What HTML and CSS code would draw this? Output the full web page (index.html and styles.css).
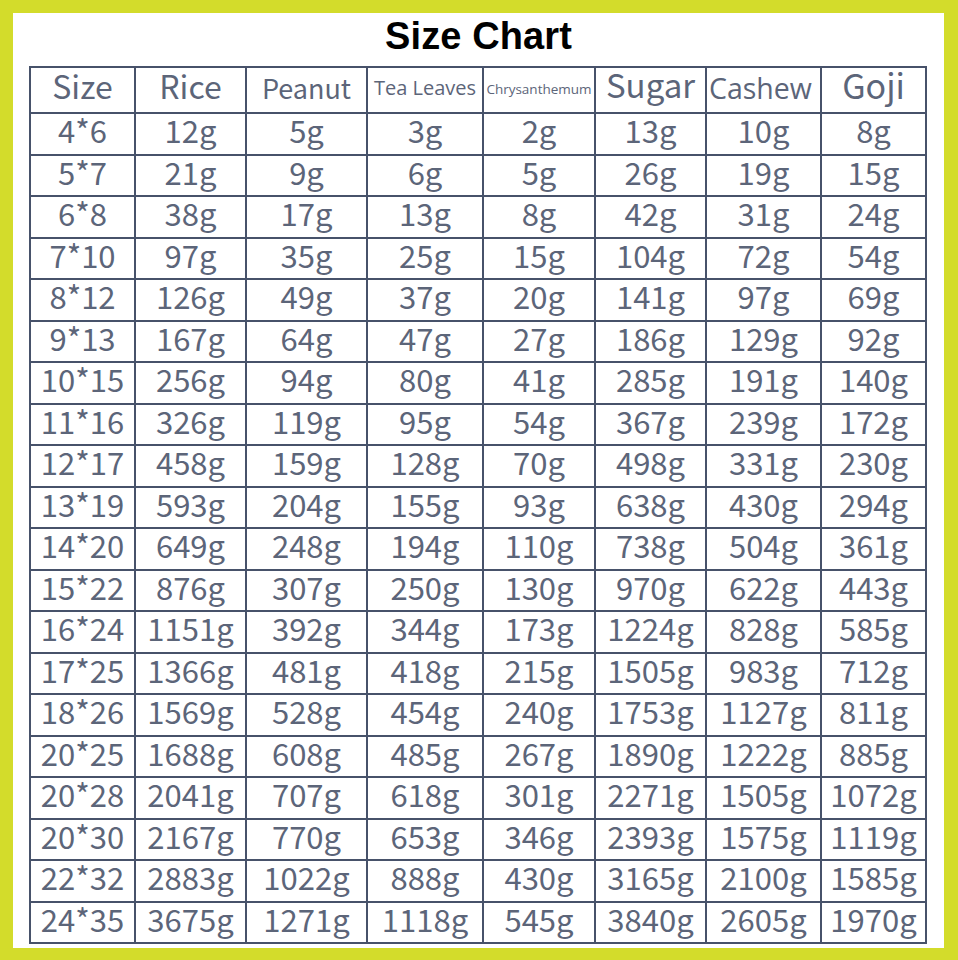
FILE: index.html
```html
<!DOCTYPE html>
<html lang="en">
<head>
<meta charset="utf-8">
<title>Size Chart</title>
<link rel="stylesheet" href="styles.css">
</head>
<body>
<div class="frame">
  <div class="sheet">
    <h1 class="title">Size Chart</h1>
    <div class="table-wrap">
    <table class="chart">
      <colgroup>
        <col class="c1"><col class="c2"><col class="c3"><col class="c4"><col class="c5"><col class="c6"><col class="c7"><col class="c8">
      </colgroup>
      <thead>
        <tr>
          <th class="h-size">Size</th>
          <th class="h-rice">Rice</th>
          <th class="h-peanut">Peanut</th>
          <th class="h-tea">Tea Leaves</th>
          <th class="h-chry">Chrysanthemum</th>
          <th class="h-sugar">Sugar</th>
          <th class="h-cashew">Cashew</th>
          <th class="h-goji">Goji</th>
        </tr>
      </thead>
      <tbody>
        <tr><td>4*6</td><td>12g</td><td>5g</td><td>3g</td><td>2g</td><td>13g</td><td>10g</td><td>8g</td></tr>
        <tr><td>5*7</td><td>21g</td><td>9g</td><td>6g</td><td>5g</td><td>26g</td><td>19g</td><td>15g</td></tr>
        <tr><td>6*8</td><td>38g</td><td>17g</td><td>13g</td><td>8g</td><td>42g</td><td>31g</td><td>24g</td></tr>
        <tr><td>7*10</td><td>97g</td><td>35g</td><td>25g</td><td>15g</td><td>104g</td><td>72g</td><td>54g</td></tr>
        <tr><td>8*12</td><td>126g</td><td>49g</td><td>37g</td><td>20g</td><td>141g</td><td>97g</td><td>69g</td></tr>
        <tr><td>9*13</td><td>167g</td><td>64g</td><td>47g</td><td>27g</td><td>186g</td><td>129g</td><td>92g</td></tr>
        <tr><td>10*15</td><td>256g</td><td>94g</td><td>80g</td><td>41g</td><td>285g</td><td>191g</td><td>140g</td></tr>
        <tr><td>11*16</td><td>326g</td><td>119g</td><td>95g</td><td>54g</td><td>367g</td><td>239g</td><td>172g</td></tr>
        <tr><td>12*17</td><td>458g</td><td>159g</td><td>128g</td><td>70g</td><td>498g</td><td>331g</td><td>230g</td></tr>
        <tr><td>13*19</td><td>593g</td><td>204g</td><td>155g</td><td>93g</td><td>638g</td><td>430g</td><td>294g</td></tr>
        <tr><td>14*20</td><td>649g</td><td>248g</td><td>194g</td><td>110g</td><td>738g</td><td>504g</td><td>361g</td></tr>
        <tr><td>15*22</td><td>876g</td><td>307g</td><td>250g</td><td>130g</td><td>970g</td><td>622g</td><td>443g</td></tr>
        <tr><td>16*24</td><td>1151g</td><td>392g</td><td>344g</td><td>173g</td><td>1224g</td><td>828g</td><td>585g</td></tr>
        <tr><td>17*25</td><td>1366g</td><td>481g</td><td>418g</td><td>215g</td><td>1505g</td><td>983g</td><td>712g</td></tr>
        <tr><td>18*26</td><td>1569g</td><td>528g</td><td>454g</td><td>240g</td><td>1753g</td><td>1127g</td><td>811g</td></tr>
        <tr><td>20*25</td><td>1688g</td><td>608g</td><td>485g</td><td>267g</td><td>1890g</td><td>1222g</td><td>885g</td></tr>
        <tr><td>20*28</td><td>2041g</td><td>707g</td><td>618g</td><td>301g</td><td>2271g</td><td>1505g</td><td>1072g</td></tr>
        <tr><td>20*30</td><td>2167g</td><td>770g</td><td>653g</td><td>346g</td><td>2393g</td><td>1575g</td><td>1119g</td></tr>
        <tr><td>22*32</td><td>2883g</td><td>1022g</td><td>888g</td><td>430g</td><td>3165g</td><td>2100g</td><td>1585g</td></tr>
        <tr><td>24*35</td><td>3675g</td><td>1271g</td><td>1118g</td><td>545g</td><td>3840g</td><td>2605g</td><td>1970g</td></tr>
      </tbody>
    </table>
    </div>
  </div>
</div>
</body>
</html>
```
FILE: styles.css
```css
html, body {
  margin: 0;
  padding: 0;
}
body {
  width: 958px;
  height: 960px;
  background: #d3dc2b;
  overflow: hidden;
}
.frame {
  box-sizing: border-box;
  width: 958px;
  height: 960px;
  padding: 13px 14px 12px 13px;
}
.sheet {
  width: 100%;
  height: 100%;
  background: #ffffff;
  box-sizing: border-box;
}
.title {
  margin: 0;
  padding: 0 0 7px 0;
  height: 46px;
  line-height: 46px;
  text-align: center;
  font-family: "Liberation Sans", Arial, sans-serif;
  font-weight: bold;
  font-size: 38px;
  color: #000000;
  letter-spacing: 0.1px;
}
.table-wrap {
  padding-left: 16px;
}
.chart {
  border-collapse: separate;
  border-spacing: 2px;
  background: #47526a;
  table-layout: fixed;
  width: 898px;
  font-family: "Noto Sans CJK SC", "Noto Sans", sans-serif;
  color: #5c6579;
}
.c1 { width: 103px; }
.c2 { width: 109px; }
.c3 { width: 119px; }
.c4 { width: 114px; }
.c5 { width: 110px; }
.c6 { width: 109px; }
.c7 { width: 113px; }
.c8 { width: 103px; }
.chart thead tr { height: 44px; }
.chart tbody tr { height: 39.5px; }
.chart th,
.chart td {
  background: #ffffff;
  padding: 0;
  text-align: center;
  white-space: nowrap;
  font-weight: normal;
  vertical-align: middle;
}
.chart th {
  font-size: 32px;
  line-height: 33px;
  padding-bottom: 10px;
}
.chart td {
  font-size: 31px;
  line-height: 32px;
  padding-bottom: 7px;
}
.chart .h-peanut {
  font-size: 27px;
  padding-bottom: 6px;
}
.chart .h-tea {
  font-family: "Open Sans", sans-serif;
  font-size: 20px;
  line-height: 28px;
  padding-bottom: 4px;
}
.chart .h-chry {
  font-family: "Open Sans", sans-serif;
  font-size: 13.5px;
  line-height: 20px;
  padding-bottom: 2px;
}
.chart .h-sugar {
  font-size: 33px;
  padding-bottom: 11px;
}
.chart .h-cashew {
  font-family: "Open Sans", sans-serif;
  font-size: 28.5px;
  line-height: 36px;
  text-align: left;
  padding-left: 2px;
  padding-bottom: 4px;
}
.chart .h-goji {
  font-size: 34px;
  padding-bottom: 11px;
}
```
